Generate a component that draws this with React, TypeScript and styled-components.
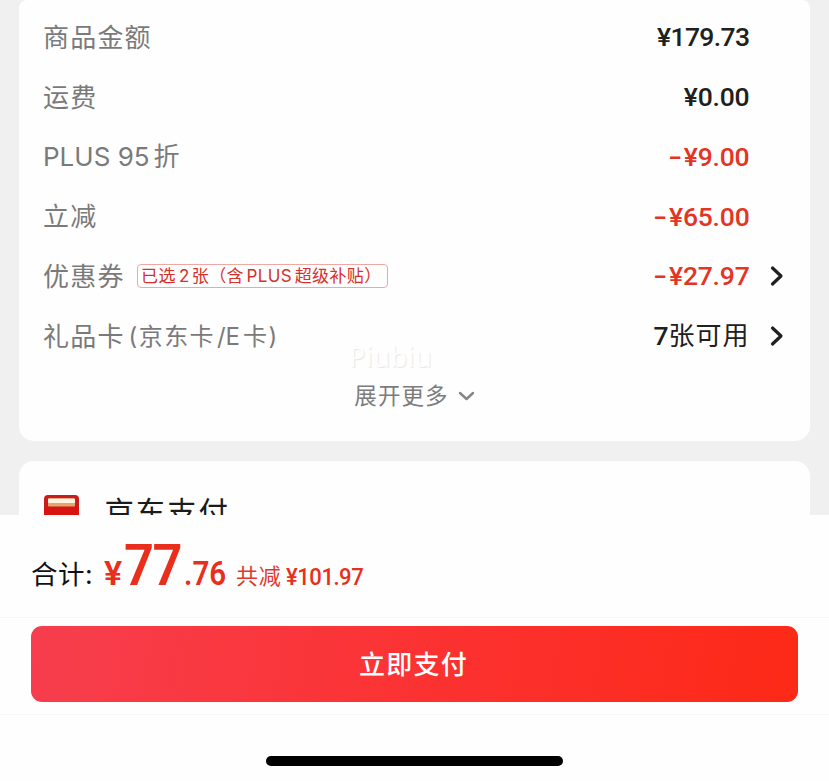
import React from "react";
import styled, { createGlobalStyle } from "styled-components";

const GlobalStyle = createGlobalStyle`
  * { box-sizing: border-box; }
  body {
    margin: 0;
    background: #fff;
    font-family: Inter, "Noto Sans CJK SC", sans-serif;
  }
`;

const Screen = styled.main`
  width: 829px;
  height: 781px;
  display: flex;
  flex-direction: column;
  background: #fefefe;
  overflow: hidden;
`;

const ScrollArea = styled.div`
  height: 515px;
  flex: none;
  padding: 0 19px;
  display: flex;
  flex-direction: column;
  gap: 20px;
  background: #f0f0f0;
  overflow: hidden;
`;

const SummaryCard = styled.section`
  height: 441px;
  flex: none;
  padding: 7px 24px 0;
  background: #fefefe;
  border-radius: 8px 8px 15px 15px;
`;

const Row = styled.div`
  height: 59.75px;
  display: flex;
  align-items: center;
  line-height: 40px;
  white-space: nowrap;
`;

const Label = styled.span<{ $spacing?: number }>`
  flex: none;
  padding-top: 2px;
  color: #7a7a7a;
  font-size: 26px;
  font-weight: 400;
  letter-spacing: ${({ $spacing = 1.2 }) => $spacing}px;
`;

const Latin = styled.span<{ $before?: number; $after?: number; $spacing?: number }>`
  margin-left: ${({ $before = 0 }) => $before}px;
  margin-right: ${({ $after = 0 }) => $after}px;
  letter-spacing: ${({ $spacing = 0 }) => $spacing}px;
`;

const LabelDetail = styled.span`
  margin-left: 4px;
  padding-top: 3px;
  color: #7a7a7a;
  font-size: 24px;
  font-weight: 400;
  letter-spacing: 1.4px;
`;

const CouponTag = styled.span`
  height: 24px;
  width: 251px;
  margin-left: 12px;
  padding-left: 3.5px;
  border: 1px solid #eea7a2;
  border-radius: 4px;
  color: #d6302a;
  font-size: 17px;
  line-height: 22px;
  letter-spacing: 0.4px;
`;

const Amount = styled.span<{ $discount?: boolean; $inset?: number; $spacing?: number }>`
  margin-left: auto;
  margin-right: ${({ $inset = 36.5 }) => $inset}px;
  padding-top: 1px;
  color: ${({ $discount }) => ($discount ? "#e43424" : "#202020")};
  font-family: Roboto, "Noto Sans CJK SC", sans-serif;
  font-size: 26.5px;
  font-weight: 500;
  letter-spacing: ${({ $spacing = -0.2 }) => $spacing}px;
`;

const MinusSign = styled.span`
  display: inline-block;
  margin-right: 2px;
  transform: scaleX(1.5);
  transform-origin: right center;
`;

const Available = styled.span`
  font-size: 26px;
  font-weight: 400;
  letter-spacing: 1px;
`;

const Chevron = styled.svg`
  flex: none;
  width: 14px;
  height: 22px;
  fill: none;
  stroke: #202020;
  stroke-width: 3.2;
  stroke-linecap: round;
  stroke-linejoin: round;
`;

const RowChevron = styled(Chevron)`
  margin-right: 2.5px;
`;

const MoreRow = styled(Row)`
  position: relative;
  padding-top: 2px;
  justify-content: center;
  gap: 9px;
  color: #7c7c7c;
  font-size: 22.5px;
  font-weight: 400;
  letter-spacing: 1.1px;
`;

const DownArrow = styled(Chevron)`
  width: 17px;
  height: 12px;
  stroke: #858585;
  stroke-width: 2.4;
`;

const Watermark = styled.span`
  position: absolute;
  left: 306px;
  top: -29px;
  color: #fefefe;
  font-family: "Noto Sans", sans-serif;
  font-size: 27px;
  font-weight: 400;
  letter-spacing: 0.5px;
  text-shadow: 1px 1px 1px #e6e6e6;
`;

const PaymentCard = styled.section`
  height: 120px;
  flex: none;
  padding: 33px 25px 0;
  display: flex;
  align-items: flex-start;
  gap: 25.5px;
  background: #fefefe;
  border-radius: 15px;
`;

const CardIcon = styled.svg`
  width: 35px;
  height: 30px;
  margin-top: 1px;
  flex: none;
`;

const PaymentName = styled.span`
  color: #1b1b1b;
  font-size: 29.5px;
  line-height: 36px;
  letter-spacing: 1.8px;
`;

const TotalBar = styled.div`
  height: 103px;
  flex: none;
  padding: 19px 31px 0;
  display: flex;
  align-items: baseline;
  border-bottom: 1px solid #f7f7f7;
  line-height: 64px;
  white-space: nowrap;
`;

const TotalLabel = styled.span`
  width: 73px;
  position: relative;
  top: -1px;
  color: #111;
  font-size: 26.5px;
  letter-spacing: 0.5px;
`;

const Price = styled.span<{
  $size: number;
  $weight?: number;
  $spacing?: number;
  $width: number;
  $stretch?: number;
}>`
  width: ${({ $width }) => $width}px;
  color: #e92f1c;
  font-family: Roboto, sans-serif;
  font-size: ${({ $size }) => $size}px;
  font-weight: ${({ $weight = 600 }) => $weight};
  letter-spacing: ${({ $spacing = 0 }) => $spacing}px;
  transform: scaleX(${({ $stretch = 1 }) => $stretch});
  transform-origin: left center;
`;

const SavedLabel = styled.span`
  width: 50px;
  position: relative;
  top: -1px;
  color: #df392c;
  font-size: 22px;
  letter-spacing: 0.8px;
`;

const ActionBar = styled.div`
  height: 97px;
  flex: none;
  padding: 8px 31px 0;
  border-bottom: 1px solid #f7f7f7;
`;

const PayButton = styled.button`
  display: block;
  width: 767px;
  height: 76px;
  padding: 0 2px 3px 0;
  border: 0;
  border-radius: 11px;
  background: linear-gradient(100deg, #f73e4e 0%, #fc302d 60%, #fc2916 100%);
  color: #fff;
  font-family: "Noto Sans CJK SC", sans-serif;
  font-size: 26px;
  font-weight: 500;
  letter-spacing: 1.2px;
`;

const HomeIndicator = styled.div`
  width: 297px;
  height: 10px;
  margin: 41px auto 0;
  border-radius: 5px;
  background: #000;
`;

const RightChevron = () => (
  <RowChevron viewBox="0 0 14 22">
    <path d="M2.5 3 11 11 2.5 19" />
  </RowChevron>
);

const Discount = ({ value, inset }: { value: string; inset?: number }) => (
  <Amount $discount $inset={inset}>
    <MinusSign>-</MinusSign>
    {value}
  </Amount>
);

export default function App() {
  return (
    <>
      <GlobalStyle />
      <Screen>
        <ScrollArea>
          <SummaryCard>
            <Row>
              <Label>商品金额</Label>
              <Amount $spacing={-0.6}>¥179.73</Amount>
            </Row>
            <Row>
              <Label>运费</Label>
              <Amount>¥0.00</Amount>
            </Row>
            <Row>
              <Label>
                <Latin $after={4}>PLUS 95</Latin>折
              </Label>
              <Discount value="¥9.00" />
            </Row>
            <Row>
              <Label>立减</Label>
              <Discount value="¥65.00" />
            </Row>
            <Row>
              <Label>优惠券</Label>
              <CouponTag>
                已选<Latin $before={3} $after={2.5}>2</Latin>张（含
                <Latin $before={2.5} $after={2.5} $spacing={0.4}>PLUS</Latin>超级补贴）
              </CouponTag>
              <Discount value="¥27.97" inset={20} />
              <RightChevron />
            </Row>
            <Row>
              <Label>礼品卡</Label>
              <LabelDetail>
                (京东卡<Latin $before={2} $after={3}>/E</Latin>卡)
              </LabelDetail>
              <Amount $inset={20}>7<Available>张可用</Available></Amount>
              <RightChevron />
            </Row>
            <MoreRow>
              <Watermark>Piubiu</Watermark>
              <span>展开更多</span>
              <DownArrow viewBox="0 0 17 12">
                <path d="M2 3 8.5 9 15 3" />
              </DownArrow>
            </MoreRow>
          </SummaryCard>
          <PaymentCard>
            <CardIcon viewBox="0 0 35 30">
              <rect width="35" height="30" rx="4" fill="#c91d19" />
              <rect y="12" width="35" height="18" fill="#d9130f" />
              <rect x="4" y="3.5" width="27" height="8" rx="1" fill="#e7a36c" />
              <rect x="4" y="3.5" width="27" height="4.5" rx="1" fill="#fff2df" />
            </CardIcon>
            <PaymentName>京东支付</PaymentName>
          </PaymentCard>
        </ScrollArea>
        <TotalBar>
          <TotalLabel>合计:</TotalLabel>
          <Price $size={34} $width={20}>¥</Price>
          <Price $size={57} $spacing={-1.5} $width={60} $stretch={0.92}>77</Price>
          <Price $size={34} $width={52} $stretch={0.87}>.76</Price>
          <SavedLabel>共减</SavedLabel>
          <Price $size={23} $weight={500} $spacing={-0.5} $width={80} $stretch={0.96}>¥101.97</Price>
        </TotalBar>
        <ActionBar>
          <PayButton>立即支付</PayButton>
        </ActionBar>
        <HomeIndicator />
      </Screen>
    </>
  );
}
